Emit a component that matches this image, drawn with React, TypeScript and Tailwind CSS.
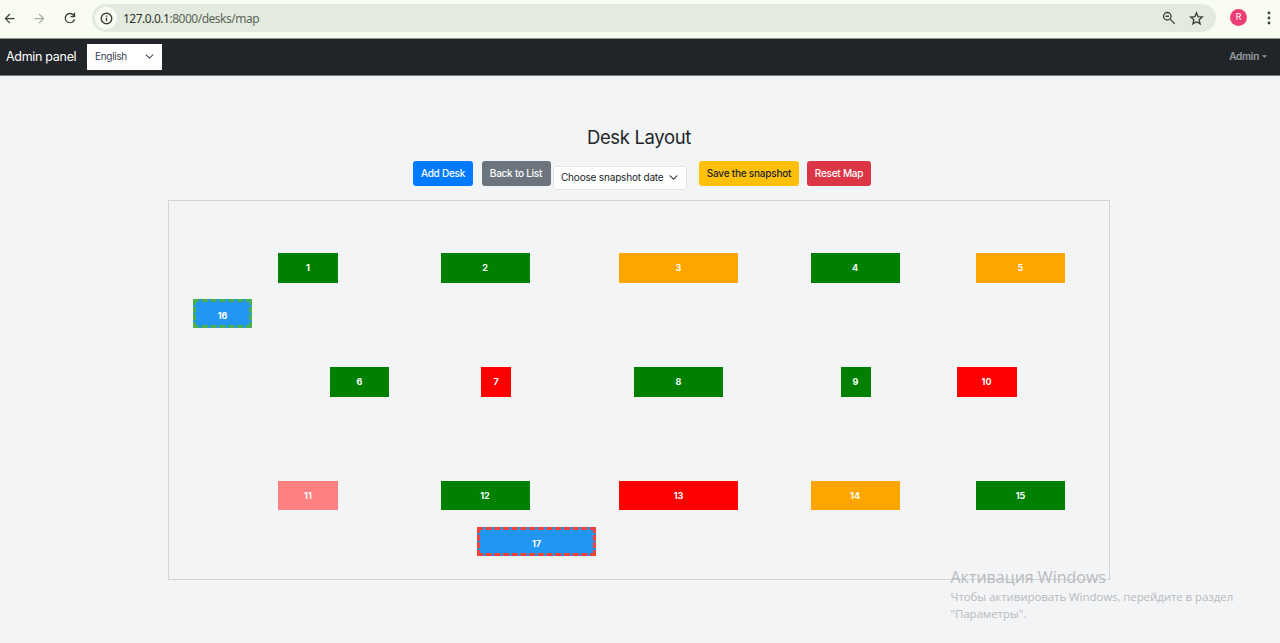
import React from 'react';

type Desk = { id: number; x: number; y: number; w: number; h: number; style: string };

const GREEN = 'bg-[#008000]';
const ORANGE = 'bg-[#ffa500]';
const RED = 'bg-[#ff0000]';

const desks: Desk[] = [
  { id: 1, x: 109, y: 52, w: 60, h: 29.5, style: GREEN },
  { id: 2, x: 271.5, y: 52, w: 89, h: 29.5, style: GREEN },
  { id: 3, x: 450, y: 52, w: 119, h: 29.5, style: ORANGE },
  { id: 4, x: 641.5, y: 52, w: 89, h: 29.5, style: GREEN },
  { id: 5, x: 807, y: 52, w: 89, h: 29.5, style: ORANGE },
  { id: 6, x: 161, y: 166, w: 59, h: 29.5, style: GREEN },
  { id: 7, x: 312, y: 166, w: 30, h: 29.5, style: RED },
  { id: 8, x: 465, y: 166, w: 89, h: 29.5, style: GREEN },
  { id: 9, x: 671.5, y: 166, w: 30, h: 29.5, style: GREEN },
  { id: 10, x: 787.5, y: 166, w: 60, h: 29.5, style: RED },
  { id: 11, x: 109, y: 280, w: 60, h: 29, style: 'bg-[#ff8080]' },
  { id: 12, x: 271.5, y: 280, w: 89, h: 29, style: GREEN },
  { id: 13, x: 450, y: 280, w: 119, h: 29, style: RED },
  { id: 14, x: 641.5, y: 280, w: 89, h: 29, style: ORANGE },
  { id: 15, x: 807, y: 280, w: 89, h: 29, style: GREEN },
  { id: 16, x: 24, y: 97.5, w: 59, h: 29.5, style: 'bg-[#2196f3] border-[3px] border-dashed border-[#4caf50] pt-[5px]' },
  { id: 17, x: 308, y: 325.5, w: 119, h: 29.5, style: 'bg-[#2196f3] border-[3px] border-dashed border-[#f44336] pt-[5px]' },
];

function Chevron({ className }: { className: string }) {
  return (
    <svg viewBox="0 0 16 16" className={className} fill="none" stroke="currentColor" strokeWidth="2" strokeLinecap="round" strokeLinejoin="round">
      <path d="m2 5 6 6 6-6" />
    </svg>
  );
}

function BrowserBar() {
  return (
    <header className="flex h-[39px] items-start border-b border-[#8f958d] bg-[#f9fcf1] text-[#3b4239]">
      <div className="flex h-9 w-[92px] shrink-0 items-center">
        <svg viewBox="0 0 24 24" className="ml-[2px] size-[15px]" fill="currentColor"><path d="m7.8 13 5.6 5.6L12 20l-8-8 8-8 1.4 1.4L7.8 11H20v2z" /></svg>
        <svg viewBox="0 0 24 24" className="ml-[15px] size-[15px] text-[#a7aca4]" fill="currentColor"><path d="m16.2 13-5.6 5.6L12 20l8-8-8-8-1.4 1.4 5.6 5.6H4v2z" /></svg>
        <svg viewBox="0 0 24 24" className="ml-[15px] size-[16px]" fill="currentColor"><path d="M12 20a8 8 0 1 1 5.8-13.5V4h2v7h-7V9h4A6 6 0 1 0 17.7 14h2.1A8 8 0 0 1 12 20z" /></svg>
      </div>
      <div className="mt-1 flex h-7 w-[1124px] shrink-0 items-center rounded-full bg-[#e3ebdf] pl-[3px]">
        <span className="grid size-[22px] place-items-center rounded-full bg-[#f9fcf1]">
          <svg viewBox="0 0 16 16" className="size-[13px]" fill="none" stroke="currentColor" strokeWidth="1.7"><circle cx="8" cy="8" r="6.5" /><path d="M8 7.2v4.2M8 4.2v1.7" /></svg>
        </span>
        <span className="ml-[6px] whitespace-nowrap pt-[2px] font-['Noto_Sans',sans-serif] text-[12px] tracking-[-0.49px] text-[#5e665c]"><span className="text-[#2d332c]">127.0.0.1</span>:8000/desks/map</span>
        <svg viewBox="0 0 16 16" className="ml-auto size-[14px]" fill="none" stroke="currentColor" strokeWidth="1.5"><circle cx="6" cy="6" r="4.3" /><path d="m9.3 9.3 5.2 5.2M4 6h4" /></svg>
        <svg viewBox="0 0 24 24" className="mr-3 ml-[13px] size-[15px]" fill="none" stroke="currentColor" strokeWidth="2.2"><path d="m12 3 2.6 6.1 6.6.6-5 4.4 1.5 6.5-5.7-3.5-5.7 3.5 1.5-6.5-5-4.4 6.6-.6z" /></svg>
      </div>
      <div className="mt-[9px] ml-[14px] grid size-[17px] place-items-center rounded-full bg-[#ec3d75] font-['Roboto',sans-serif] text-[9px] text-white">R</div>
      <svg viewBox="0 0 4 16" className="mt-[10px] ml-[20px] h-4 w-1" fill="currentColor"><circle cx="2" cy="3" r="1.4" /><circle cx="2" cy="8" r="1.4" /><circle cx="2" cy="13" r="1.4" /></svg>
    </header>
  );
}

export default function App() {
  return (
    <div className="relative h-[643px] overflow-hidden bg-[#f3f4f6] font-['Inter',sans-serif] text-[#212529]">
      <BrowserBar />
      <nav className="flex h-[37px] items-center border-b border-[#77797c] bg-[#212529] pl-[6px]">
        <span className="w-[81px] whitespace-nowrap text-[12.5px] tracking-[-0.3px] text-white">Admin panel</span>
        <button className="flex h-[26px] w-[75px] items-center justify-between bg-white pr-2 pb-px pl-2 text-[10px] tracking-[-0.3px] text-[#374151]">
          English<Chevron className="size-[9px] text-[#4b5563]" />
        </button>
        <span className="mr-[13px] ml-auto flex items-center gap-[3px] pb-px text-[10px] font-semibold tracking-[-0.25px] text-[#9b9d9f]">
          Admin<svg viewBox="0 0 6 3" className="h-[3px] w-[5px]" fill="currentColor"><path d="M0 0h6L3 3z" /></svg>
        </span>
      </nav>
      <main className="flex flex-col items-center pt-[48px] pr-[2px]">
        <h1 className="h-[37px] whitespace-nowrap text-[18.5px] leading-[26px] tracking-[-0.35px]">Desk Layout</h1>
        <div className="ml-[6px] flex h-[39px] w-[458px] items-start whitespace-nowrap text-[10px] font-medium tracking-[-0.24px] text-white">
          <button className="mr-[8.5px] h-[24.5px] w-[60px] shrink-0 rounded-[3px] bg-[#007bff]">Add Desk</button>
          <button className="mr-[2.5px] h-[24.5px] w-[69px] shrink-0 rounded-[3px] bg-[#6c757d]">Back to List</button>
          <button className="mt-[5px] mr-[12px] flex h-[24px] w-[134px] shrink-0 items-center justify-between rounded-[3px] border border-[#e3e6e9] bg-white pr-2 pb-px pl-[7px] font-normal tracking-[-0.18px] text-[#212529]">
            Choose snapshot date<Chevron className="size-[9px] text-[#343a40]" />
          </button>
          <button className="mr-[8px] h-[24.5px] w-[100px] shrink-0 rounded-[3px] bg-[#ffc107] tracking-[-0.22px] text-[#212529]">Save the snapshot</button>
          <button className="h-[24.5px] w-[64px] shrink-0 rounded-[3px] bg-[#dc3545]">Reset Map</button>
        </div>
        <section className="relative h-[380px] w-[942px] border border-[#d3d5d7]">
          {desks.map((d) => (
            <div
              key={d.id}
              className={`absolute flex items-center justify-center text-[9px] leading-none font-bold text-white ${d.style}`}
              style={{ left: d.x, top: d.y, width: d.w, height: d.h }}
            >
              {d.id}
            </div>
          ))}
        </section>
      </main>
      <aside className="absolute top-[567px] left-[950.5px] whitespace-nowrap font-['Open_Sans',sans-serif] text-[#b8babc]">
        <p className="text-[16px] leading-[21px]">Активация Windows</p>
        <p className="text-[11.5px] leading-[17px] tracking-[-0.08px]">Чтобы активировать Windows, перейдите в раздел<br />"Параметры".</p>
      </aside>
    </div>
  );
}
